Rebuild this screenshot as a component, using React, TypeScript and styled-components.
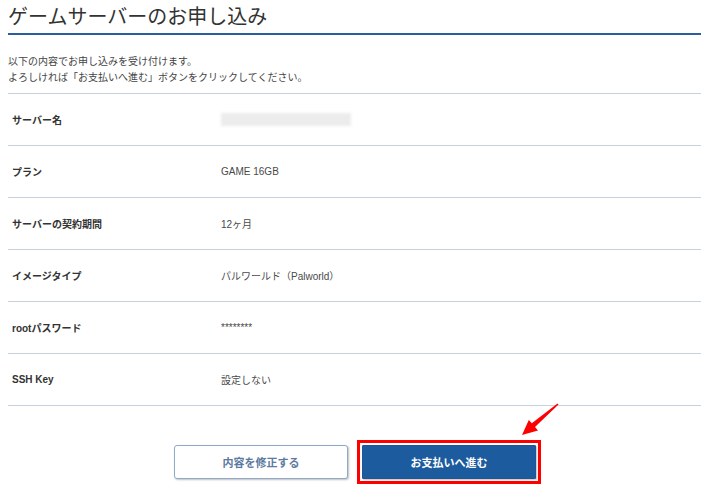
import styled, { createGlobalStyle } from 'styled-components';

const GlobalStyle = createGlobalStyle`
  html, body {
    margin: 0;
    padding: 0;
    background: #ffffff;
  }
  body {
    font-family: "Liberation Sans", "Noto Sans CJK JP", sans-serif;
    color: #333333;
  }
`;

interface Row {
  label: string;
  value?: string;
  masked?: boolean;
}

const ROWS: Row[] = [
  { label: 'サーバー名', masked: true },
  { label: 'プラン', value: 'GAME 16GB' },
  { label: 'サーバーの契約期間', value: '12ヶ月' },
  { label: 'イメージタイプ', value: 'パルワールド（Palworld）' },
  { label: 'rootパスワード', value: '********' },
  { label: 'SSH Key', value: '設定しない' }
];

export default function App() {
  return (
    <Page>
      <GlobalStyle />
      <Title>ゲームサーバーのお申し込み</Title>
      <Intro>
        以下の内容でお申し込みを受け付けます。
        <br />
        よろしければ「お支払いへ進む」ボタンをクリックしてください。
      </Intro>
      <Table>
        {ROWS.map((row) => (
          <TableRow key={row.label}>
            <Label>{row.label}</Label>
            {row.masked ? <Blurred /> : <Value>{row.value}</Value>}
          </TableRow>
        ))}
      </Table>
      <Actions>
        <Button>内容を修正する</Button>
        <Highlight>
          <Button primary>お支払いへ進む</Button>
        </Highlight>
      </Actions>
      <Arrow viewBox="0 0 48 42" width="48" height="42">
        <polygon
          points="7,35 23,30.5 20,27.1 43.5,4.6 42.5,3.4 16.8,23.3 13.8,19.9"
          fill="#ff0000"
        />
      </Arrow>
    </Page>
  );
}

const Page = styled.div`
  position: relative;
  width: 710px;
  height: 489px;
  box-sizing: border-box;
  padding: 0 9px 0 8px;
  overflow: hidden;
`;

const Title = styled.h1`
  margin: 2px 0 0;
  padding: 0 0 3px;
  font-family: "Noto Sans CJK JP", sans-serif;
  font-size: 20px;
  font-weight: 400;
  line-height: 28px;
  color: #333333;
  border-bottom: 2px solid #2a5f9e;
`;

const Intro = styled.p`
  margin: 18px 0 0;
  font-family: "Noto Sans CJK JP", sans-serif;
  font-size: 10px;
  line-height: 16px;
  color: #444444;
`;

const Table = styled.div`
  margin-top: 8px;
  border-top: 1px solid #c6d1dd;
`;

const TableRow = styled.div`
  display: grid;
  grid-template-columns: 209px 1fr;
  align-items: center;
  height: 51px;
  padding-left: 4px;
  border-bottom: 1px solid #c6d1dd;
`;

const Label = styled.div`
  font-size: 10px;
  font-weight: 700;
  color: #333333;
`;

const Value = styled.div`
  font-size: 10px;
  color: #4a4a4a;
`;

const Blurred = styled.div`
  width: 130px;
  height: 13px;
  background: #ececec;
  filter: blur(1.5px);
`;

const Actions = styled.div`
  display: flex;
  justify-content: center;
  align-items: center;
  gap: 15px;
  margin-top: 39px;
`;

const Highlight = styled.div`
  display: flex;
  margin: -6px;
  padding: 2px;
  border: 3px solid #ff0000;
`;

const Button = styled.button<{ primary?: boolean }>`
  width: 174px;
  height: 34px;
  border-radius: ${(p) => (p.primary ? '1px' : '3px')};
  font-family: "Noto Sans CJK JP", sans-serif;
  font-size: 11px;
  font-weight: 700;
  cursor: pointer;
  border: 1px solid ${(p) => (p.primary ? '#1b5696' : '#8eaacb')};
  background: ${(p) => (p.primary ? '#1d5b9f' : '#ffffff')};
  color: ${(p) => (p.primary ? '#ffffff' : '#5c79a0')};
  box-shadow: 1px 1px 2px rgba(0, 0, 0, 0.25);
`;

const Arrow = styled.svg`
  position: absolute;
  left: 515px;
  top: 400px;
`;
